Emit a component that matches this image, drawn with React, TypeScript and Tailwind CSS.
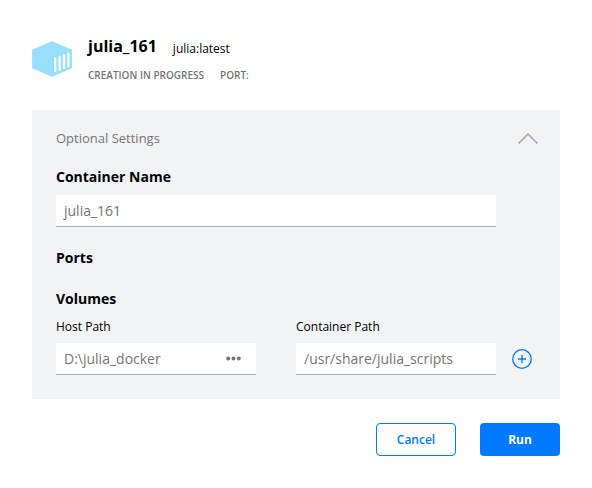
export default function App() {
  return (
    <main className="h-[488px] w-[592px] bg-white px-8 font-['Open_Sans',sans-serif] text-black">
      <header className="flex h-[110px] pt-9">
        <svg className="mt-[5px]" width="40" height="36" viewBox="0 0 40 36">
          <path d="M20 .9 39.2 9.2v17.6L20 35.1.8 26.8V9.2Z" fill="#98dfff" stroke="#98dfff" strokeWidth="1.4" strokeLinejoin="round" />
          <path d="M23.2 17.3v12.9M27.6 15.8v13M32 14.2v13M36.4 12.7v12.8" stroke="white" strokeWidth="2.2" strokeLinecap="round" />
        </svg>
        <div className="ml-4">
          <div className="flex h-5 items-center">
            <h1 className="text-base font-bold leading-5">julia_161</h1>
            <span className="ml-4 mt-[5px] text-xs">julia:latest</span>
          </div>
          <div className="mt-[11px] flex gap-4 text-[10px] leading-4 font-semibold text-[#757575]">
            <span>CREATION IN PROGRESS</span><span>PORT:</span>
          </div>
        </div>
      </header>
      <section className="h-[289px] bg-[#f1f3f5] px-6 pt-[19px]">
        <div className="flex h-5 items-center justify-between text-[13px] text-[#757575]">
          <span>Optional Settings</span>
          <svg className="mr-[-2px]" width="20" height="12" viewBox="0 0 20 12"><path d="m.5 10.5 9.5-9.5 9.5 9.5" fill="none" stroke="#95a2ae" strokeWidth="1.3" /></svg>
        </div>
        <h2 className="mt-[18px] text-sm leading-5 font-bold">Container Name</h2>
        <div className="mt-2 flex h-8 w-[440px] items-center border-b border-[#9eafbd] bg-white px-2 text-sm text-[#757575]">julia_161</div>
        <h2 className="mt-[21px] text-sm leading-5 font-bold">Ports</h2>
        <h2 className="mt-[21px] text-sm leading-5 font-bold">Volumes</h2>
        <div className="mt-[10px] flex text-xs leading-4"><span className="w-60">Host Path</span><span>Container Path</span></div>
        <div className="mt-2 flex items-center">
          <div className="flex h-8 w-[200px] items-center justify-between border-b border-[#9eafbd] bg-white pr-[15px] pl-2 text-sm text-[#757575]">
            <span>D:\julia_docker</span>
            <svg width="15" height="5" viewBox="0 0 15 5" fill="#757575"><circle cx="2.2" cy="2.5" r="2" /><circle cx="7.5" cy="2.5" r="2" /><circle cx="12.8" cy="2.5" r="2" /></svg>
          </div>
          <div className="ml-10 flex h-8 w-[200px] items-center border-b border-[#9eafbd] bg-white px-2 text-sm text-[#757575]">/usr/share/julia_scripts</div>
          <svg className="ml-4" width="20" height="20" viewBox="0 0 20 20" fill="none" stroke="#007bff"><circle cx="10" cy="10" r="9.3" strokeWidth="1.3" /><path d="M10 6v8M6 10h8" strokeWidth="1.4" /></svg>
        </div>
      </section>
      <footer className="mt-6 flex justify-end gap-6 text-xs font-semibold">
        <button className="h-[33px] w-20 rounded border border-[#007bff] text-[#007bff]">Cancel</button>
        <button className="h-[33px] w-20 rounded bg-[#007bff] font-bold text-white">Run</button>
      </footer>
    </main>
  );
}
